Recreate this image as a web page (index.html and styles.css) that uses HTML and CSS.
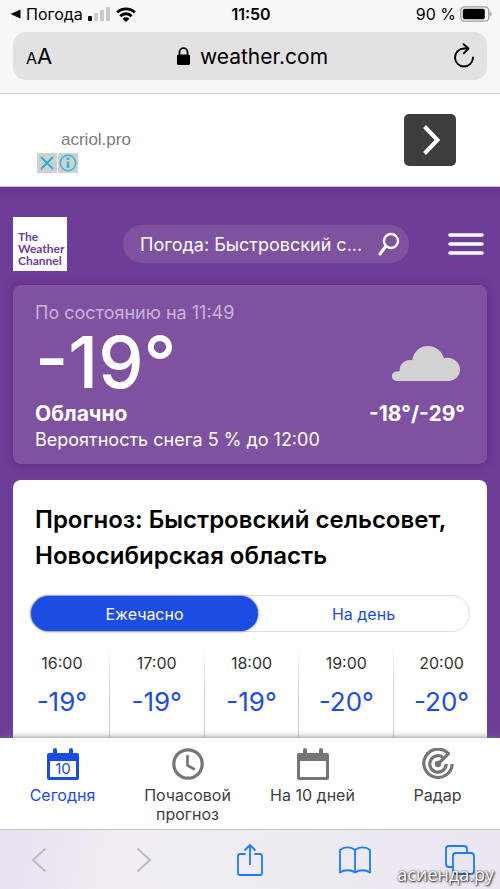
FILE: index.html
```html
<!DOCTYPE html>
<html lang="ru">
<head>
<meta charset="utf-8">
<meta name="viewport" content="width=device-width, initial-scale=1">
<title>Погода: Быстровский сельсовет</title>
<link rel="stylesheet" href="styles.css">
</head>
<body>
<header class="browser">
  <div class="status">
    <div class="status-left">
      <svg width="11" height="10" viewBox="0 0 11 10"><path d="M10.500 .5v9L.5 5z"/></svg>
      <span>Погода</span>
      <svg class="signal" width="23" height="15" viewBox="0 0 23 15"><rect x="0" y="9" width="4" height="5" rx="1"/><g fill="#c9c9c9"><rect x="6" y="6" width="4" height="8" rx="1"/><rect x="12" y="3" width="4" height="11" rx="1"/><rect x="18" y="0" width="4" height="14" rx="1"/></g></svg>
      <svg class="wifi" width="20" height="15" viewBox="0 0 20 15"><g fill="none" stroke="#000" stroke-width="2.900"><path d="M1.200 5.500a12.400 12.400 0 0 1 17.600 0"/><path d="M4.300 9.200a8 8 0 0 1 11.400 0"/></g><path d="M10 15 6.600 11.700a4.800 4.800 0 0 1 6.800 0z"/></svg>
    </div>
    <time class="clock">11:50</time>
    <div class="status-right">
      <span>90 %</span>
      <svg width="32" height="16" viewBox="0 0 32 16"><rect x=".8" y=".8" width="28" height="14.400" rx="4" fill="#fff" stroke="#999" stroke-width="1.300"/><rect x="2.800" y="2.800" width="22" height="10.400" rx="2"/><path d="M30.300 5.500q3 2.500 0 5z" fill="#999"/></svg>
    </div>
  </div>
  <div class="address">
    <button class="reader" aria-label="Размер текста"><span class="reader-small">A</span>A</button>
    <div class="domain">
      <svg width="13" height="18" viewBox="0 0 13 18"><rect y="7.500" width="13" height="10.500" rx="1.600"/><path d="M2.500 8.500V5.200a4 4 0 0 1 8 0v3.300" fill="none" stroke="#000" stroke-width="1.800"/></svg>
      <span>weather.com</span>
    </div>
    <button class="reload" aria-label="Обновить"><svg width="22" height="26" viewBox="0 0 22 26" fill="none" stroke="#000" stroke-width="1.900" stroke-linecap="round" stroke-linejoin="round"><path d="M20 14.500A9 9 0 1 1 11 5.500h4.500M10.500 1.200l5 4.300-4.700 4.800"/></svg></button>
  </div>
</header>

<main class="page">
  <aside class="ad">
    <div class="ad-copy">
      <a class="ad-link" href="#">acriol.pro</a>
      <div class="ad-marks">
        <button aria-label="Закрыть"><svg width="20" height="20" viewBox="0 0 20 20" fill="none" stroke="#1fb4d2" stroke-width="1.800"><path d="m4 4 12 12M16 4 4 16"/></svg></button>
        <button aria-label="О рекламе"><svg width="20" height="20" viewBox="0 0 20 20" fill="none" stroke="#36b9d2" stroke-width="1.600"><circle cx="10" cy="10" r="7.700"/><path d="M10 8.500V15M10 4.500V7" stroke-width="2.800"/></svg></button>
      </div>
    </div>
    <button class="ad-go" aria-label="Перейти"><svg width="20" height="32" viewBox="0 0 20 32" fill="none" stroke="#fff" stroke-width="4"><path d="m2.500 2.500 13 13.500-13 13.500"/></svg></button>
  </aside>

  <div class="weather">
    <div class="masthead">
      <a class="logo" href="#">The<br>Weather<br>Channel</a>
      <button class="search"><span>Погода: Быстровский с...</span><svg width="22" height="24" viewBox="0 0 22 24" fill="none" stroke="#fff" stroke-width="2.400" stroke-linecap="round"><circle cx="13" cy="9" r="7"/><path d="m8 14-6 8" stroke-width="3"/></svg></button>
      <button class="menu" aria-label="Меню"><svg width="36" height="22" viewBox="0 0 36 22" stroke="#fff" stroke-width="3.600" stroke-linecap="round"><path d="M2 2h32M2 11h32M2 20h32"/></svg></button>
    </div>

    <section class="current">
      <p class="asof">По состоянию на 11:49</p>
      <div class="reading">
        <p class="temperature">-19°</p>
        <svg class="cloud" width="68" height="35" viewBox="0 0 68 35" fill="#d2d2d2"><path d="M4.500 35a4.500 4.500 0 0 1 0-9.500q1.600-.3 3.200-.2C7 18.500 13.500 12.500 20.300 14.300 21.300 6 27.800 0 36 0c7.800 0 14 5 15.800 12.200C60.500 10.200 68 16 68 23.500 68 30 63 35 56.500 35z"/></svg>
      </div>
      <div class="condition"><strong>Облачно</strong><strong>-18°/-29°</strong></div>
      <p class="chance">Вероятность снега 5 % до 12:00</p>
    </section>

    <section class="forecast">
      <h1>Прогноз: Быстровский сельсовет, Новосибирская область</h1>
      <div class="switch">
        <button class="selected">Ежечасно</button>
        <button>На день</button>
      </div>
      <ol class="hours">
        <li><time>16:00</time><span>-19°</span></li>
        <li><time>17:00</time><span>-19°</span></li>
        <li><time>18:00</time><span>-19°</span></li>
        <li><time>19:00</time><span>-20°</span></li>
        <li><time>20:00</time><span>-20°</span></li>
      </ol>
    </section>
  </div>
</main>

<nav class="tabs">
  <a class="active" href="#">
    <svg width="32" height="32" viewBox="0 0 32 32"><path fill="#1b4de4" fill-rule="evenodd" d="M6 2a2 2 0 0 1 4 0v3h12V2a2 2 0 0 1 4 0v3h4q2 0 2 2v23q0 2-2 2H2q-2 0-2-2V7q0-2 2-2h4zM3 13v16h26V13z"/><text x="16" y="26" text-anchor="middle" class="day">10</text></svg>
    <span>Сегодня</span>
  </a>
  <a href="#">
    <svg width="32" height="32" viewBox="0 0 32 32" fill="none" stroke="#757575"><circle cx="16" cy="16" r="14.200" stroke-width="3.200"/><path d="M15.500 7v10.500l7.300 4" stroke-width="2.600"/></svg>
    <span>Почасовой прогноз</span>
  </a>
  <a href="#">
    <svg width="32" height="32" viewBox="0 0 32 32"><path fill="#757575" fill-rule="evenodd" d="M6 2a2 2 0 0 1 4 0v3h12V2a2 2 0 0 1 4 0v3h4q2 0 2 2v23q0 2-2 2H2q-2 0-2-2V7q0-2 2-2h4zM3 13v16h26V13z"/></svg>
    <span>На 10 дней</span>
  </a>
  <a href="#">
    <svg width="32" height="32" viewBox="0 0 32 32" fill="none" stroke="#757575" stroke-width="3.200"><path d="M16 16 26.500 5.700A14.200 14.200 0 1 0 30.200 16" stroke-linejoin="round"/><path d="M20.800 9.300A8.200 8.200 0 1 0 24.200 16"/><circle cx="16" cy="16" r="3.200" fill="#757575" stroke="none"/></svg>
    <span>Радар</span>
  </a>
</nav>

<footer class="toolbar">
  <button aria-label="Назад"><svg width="16" height="26" viewBox="0 0 16 26" fill="none" stroke="#bdbac0" stroke-width="2"><path d="M14.500 1.500 2 13l12.500 11.500"/></svg></button>
  <button aria-label="Вперёд"><svg width="16" height="26" viewBox="0 0 16 26" fill="none" stroke="#bdbac0" stroke-width="2"><path d="M1.500 1.500 14 13 1.500 24.500"/></svg></button>
  <button aria-label="Поделиться"><svg width="28" height="34" viewBox="0 0 28 34" fill="none" stroke="#147efb" stroke-width="1.800" stroke-linejoin="round"><path d="M9.500 11H4q-2 0-2 2v17q0 2 2 2h20q2 0 2-2V13q0-2-2-2h-5.500M14 22V2M8.500 7.500 14 2l5.500 5.500"/></svg></button>
  <button aria-label="Закладки"><svg width="32" height="28" viewBox="0 0 32 28" fill="none" stroke="#147efb" stroke-width="1.800" stroke-linejoin="round"><path d="M16 4v22.500C12 23.500 5 23.500 1 26.500V4C5 .5 12 .5 16 4c4-3.500 11-3.500 15 0v22.500c-4-3-11-3-15 0"/></svg></button>
  <button aria-label="Вкладки"><svg width="30" height="30" viewBox="0 0 30 30" fill="none" stroke="#147efb" stroke-width="1.800"><rect x="8" y="8" width="21" height="21" rx="3"/><path d="M8 22H4q-3 0-3-3V4q0-3 3-3h15q3 0 3 3v4"/></svg></button>
  <span class="watermark">асиенда.ру</span>
</footer>
</body>
</html>
```
FILE: styles.css
```css
* { box-sizing: border-box; }

body {
  margin: 0;
  height: 100vh;
  display: flex;
  flex-direction: column;
  overflow: hidden;
  font-family: Inter, "Liberation Sans", sans-serif;
  color: #000;
  background: #fff;
}

button {
  padding: 0;
  border: 0;
  background: none;
  font: inherit;
  color: inherit;
}

a { color: inherit; text-decoration: none; }
p, h1, ol { margin: 0; padding: 0; }
svg { display: block; flex: none; }

.browser {
  flex: none;
  padding-bottom: 13px;
  background: #f7f7f7;
  border-bottom: 1px solid #cfcfcf;
}

.status {
  display: grid;
  grid-template-columns: 1fr auto 1fr;
  align-items: center;
  height: 28px;
  padding: 0 8px 0 10px;
  margin-bottom: 4px;
  font-size: 16px;
}

.status-left, .status-right { display: flex; align-items: center; gap: 5px; }
.status-right { justify-content: flex-end; gap: 4px; }
.clock { font-weight: 600; }

.address {
  display: grid;
  grid-template-columns: 1fr auto 1fr;
  align-items: center;
  height: 48px;
  margin: 0 13px;
  padding: 0 12px 0 13px;
  border-radius: 13px;
  background: #e2e2e3;
}

.reader { justify-self: start; font-size: 22px; }
.reader-small { font-size: 16px; }
.domain { display: flex; align-items: center; gap: 10px; font-size: 21px; }
.domain { padding-left: 4px; }
.reload { justify-self: end; }

.page {
  flex: 1;
  min-height: 0;
  display: flex;
  flex-direction: column;
  overflow: hidden;
}

.ad {
  flex: none;
  display: flex;
  justify-content: space-between;
  align-items: flex-start;
  height: 93px;
  padding: 20px 44px 0 37px;
  border-bottom: 1px solid #c9bcd6;
}

.ad-copy { padding-top: 14px; }

.ad-link {
  display: block;
  margin-left: 24px;
  font: 17px/24px "Liberation Sans", sans-serif;
  color: #7b7b7b;
}

.ad-marks { display: flex; gap: 1px; margin-top: 1px; }
.ad-marks button { background: #d0d0d0; }

.ad-go {
  display: grid;
  place-items: center;
  width: 52px;
  height: 52px;
  padding-left: 4px;
  border-radius: 5px;
  background: #3e3e3e;
}

.weather {
  flex: 1;
  min-height: 0;
  display: flex;
  flex-direction: column;
  padding: 30px 13px 0;
  background: linear-gradient(#653691, #6d3d98 12px);
}

.masthead {
  flex: none;
  display: flex;
  align-items: center;
  justify-content: space-between;
  margin-bottom: 14px;
}

.logo {
  width: 54px;
  height: 54px;
  padding: 14px 0 0 5px;
  background: #fff;
  color: #6d3d98;
  font: 700 12px/12px Lato, sans-serif;
}

.search {
  display: flex;
  align-items: center;
  justify-content: space-between;
  width: 286px;
  height: 38px;
  margin-left: 17px;
  padding: 0 9px 0 17px;
  border-radius: 19px;
  background: #7e52a1;
  color: #fff;
  font-size: 18px;
}

.menu { margin-right: 3px; }

.current {
  flex: none;
  margin-bottom: 16px;
  padding: 16px 22px 11px;
  border-radius: 8px;
  background: #7e52a1;
  box-shadow: 0 0 10px #5b2c84;
  color: #fff;
}

.asof { font-size: 18px; line-height: 23px; color: #c8b3d8; }
.reading { display: flex; justify-content: space-between; }
.temperature { font-size: 72px; line-height: 76px; font-weight: 500; }
.cloud { margin: 22px 5px 0 0; }
.condition { display: flex; justify-content: space-between; font-size: 21px; line-height: 27px; }
.chance { font-size: 18px; line-height: 26px; }

.forecast {
  flex: 1;
  display: flex;
  flex-direction: column;
  min-height: 0;
  overflow: hidden;
  border-radius: 8px 8px 0 0;
  background: #fff;
}

.forecast h1 {
  padding: 22px 22px 21px;
  font-size: 24px;
  line-height: 36px;
  font-weight: 600;
}

.switch {
  display: grid;
  grid-template-columns: 227px 1fr;
  flex: none;
  height: 37px;
  margin: 0 17px 16px;
  border: 1px solid #dedede;
  border-radius: 19px;
  font-size: 16px;
  color: #1b4de4;
}

.switch .selected {
  border-radius: 18px;
  background: #1b4de4;
  box-shadow: 0 0 3px #555;
  color: #fff;
}

.hours {
  flex: 1;
  display: grid;
  grid-template-columns: repeat(5, 20%);
  margin-left: 2px;
  margin-right: -2px;
  list-style: none;
}

.hours li {
  display: flex;
  flex-direction: column;
  align-items: center;
  padding-top: 5px;
  border-right: 1px solid;
  border-image: linear-gradient(#fff, #ccc 50px) 1;
}

.hours li:last-child { border: 0; }
.hours time { font-size: 16px; line-height: 20px; color: #333; }
.hours span { margin-top: 13px; font-size: 26px; line-height: 32px; color: #1b4de4; }

.tabs {
  position: relative;
  flex: none;
  display: grid;
  grid-template-columns: repeat(4, 1fr);
  height: 91px;
  padding-top: 10px;
  background: #fff;
  box-shadow: 0 0 7px #777;
  font-size: 16px;
  line-height: 19px;
  color: #404040;
}

.tabs a { display: flex; flex-direction: column; align-items: center; gap: 6px; text-align: center; }
.tabs .active { color: #1b4de4; }
.day { font-size: 15px; fill: #1b4de4; }

.toolbar {
  position: relative;
  flex: none;
  display: flex;
  justify-content: space-between;
  align-items: center;
  height: 60px;
  padding: 0 24px 0 23px;
  border-top: 1px solid #c6c3c8;
  background: linear-gradient(100deg, #e9e0ef, #f2edf5 25%, #eeebf2 60%, #ece5f2);
}

.toolbar button { display: grid; place-items: center; width: 32px; }

.watermark {
  position: absolute;
  right: 6px;
  bottom: 3px;
  font: 18px/24px "Open Sans", sans-serif;
  color: #fff;
  text-shadow: 1px 1px 2px #222, 0 0 2px #333;
}
```
